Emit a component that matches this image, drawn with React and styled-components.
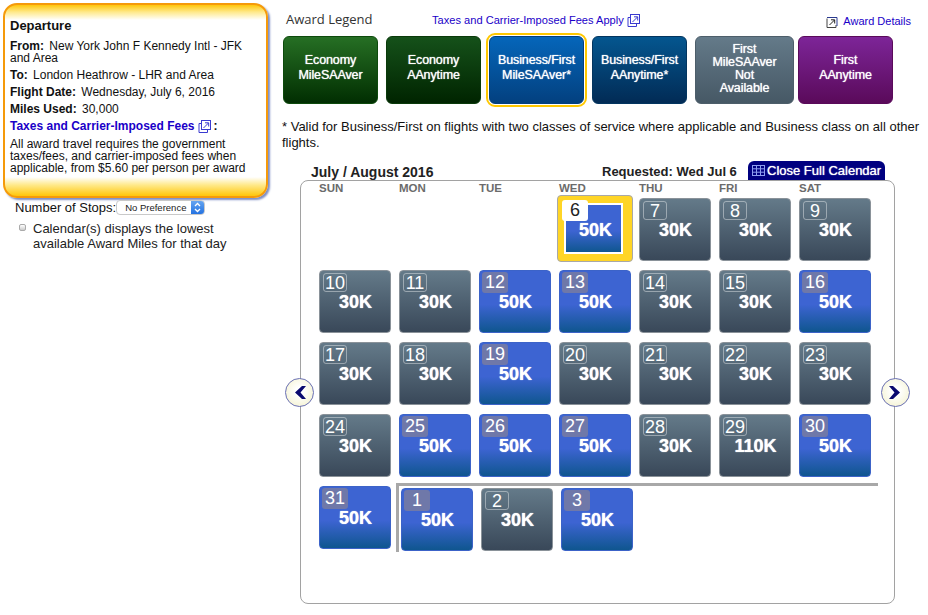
import React from 'react';
import styled, { createGlobalStyle } from 'styled-components';

const Global = createGlobalStyle`
  html, body { margin: 0; padding: 0; background: #fff; }
  body { font-family: "Liberation Sans", Arial, sans-serif; color: #111; }
  * { box-sizing: border-box; }
`;

const Page = styled.div`
  width: 928px; height: 615px; overflow: hidden; display: flex; position: relative;
`;
const Side = styled.aside`
  width: 283px; flex: none; padding: 3px 0 0 3px;
`;
const Main = styled.main`
  width: 645px; flex: none; display: flex; flex-direction: column;
`;

/* Left panel */
const Panel = styled.section`
  width: 265px; height: 195px; border: 2px solid #f59a0a; border-radius: 14px;
  padding: 14px 5px 0 5px; font-size: 12px; line-height: 12px;
  background: linear-gradient(#ffc60a 0, #ffe98a 7px, #fff 15px, #fff 172px, #ffe98a 180px, #ffc60a 191px);
  box-shadow: 2px 2px 2px #7f8fc4;
`;
const PanelTitle = styled.h2`
  margin: 0 0 7px; font-size: 13px; line-height: 14px; font-weight: bold;
`;
const InfoLine = styled.p`
  margin: 0 0 5px; color: #111;
  b { margin-right: 2px; }
`;
const FeesLine = styled.div`
  display: flex; align-items: center; height: 12px; gap: 3px; font-weight: bold;
`;
const Link = styled.a`
  color: #1a00c8; text-decoration: none;
`;
const BoldLink = styled(Link)`font-weight: bold;`;
const FeesNote = styled.p`margin: 6px 0 0;`;

const Stops = styled.div`
  display: flex; align-items: center; gap: 0; margin: 1px 0 0 12px; font-size: 13px; height: 16px;
`;
const Select = styled.div`
  width: 89px; height: 15px; border-radius: 4px; border: 1px solid #c9c9c9; background: #fff;
  display: flex; align-items: center; justify-content: space-between;
  font-size: 9.5px; padding-left: 8px; color: #222; overflow: hidden;
`;
const SelectCap = styled.span`
  width: 13px; height: 15px; display: flex; align-items: center; justify-content: center;
  background: linear-gradient(#6aa8f2, #1f6fe0);
`;
const CheckRow = styled.label`
  display: flex; margin: 6px 0 0 16px; font-size: 13px; line-height: 15px; color: #222;
`;
const Check = styled.span`
  width: 7px; height: 7px; margin: 3px 7px 0 0; flex: none; border-radius: 2px;
  border: 1px solid #aaa; background: linear-gradient(#fff, #ccc);
`;

/* Legend */
const LegendHead = styled.div`
  height: 36px; display: flex; align-items: flex-start; position: relative;
`;
const LegendTitle = styled.h3`
  margin: 12px 0 0 3px; width: 146px; font: 400 13px/15px "Open Sans", sans-serif; color: #333;
`;
const TaxLink = styled(Link)`
  margin-top: 13px; font-size: 11.1px; line-height: 14px; display: flex; align-items: center; gap: 3px;
`;
const DetailLink = styled(Link)`
  margin: 14px 0 0 auto; padding-right: 17px; font-size: 11px; line-height: 14px; display: flex; align-items: center; gap: 5px;
`;
const LegendRow = styled.div`
  display: flex; gap: 8px; height: 68px;
`;
const palette = {
  green: ['#266f24', '#012e01', '#0d4a0c'],
  dark: ['#15511a', '#002400', '#0a3a0a'],
  blue: ['#0566ba', '#03407f', '#03407f'],
  navy: ['#04568f', '#022b55', '#03355f'],
  gray: ['#647a89', '#465865', '#4d5e6a'],
  purple: ['#7d2598', '#5a0a5a', '#5a0a5a'],
};
const LegendItem = styled.div`
  width: ${p => p.$w || 95}px; height: 68px; border-radius: 6px; flex: none;
  background: linear-gradient(${p => palette[p.$c][0]}, ${p => palette[p.$c][1]});
  border: 1px solid ${p => palette[p.$c][2]};
  color: #fff; font-size: 12.5px; line-height: ${p => p.$tight ? 13 : 15}px; font-weight: 400;
  text-shadow: 0 0 1px #fff;
  display: flex; align-items: center; justify-content: center; text-align: center;
  letter-spacing: -0.1px; padding-bottom: ${p => p.$tight ? 3 : 5}px;
  margin-right: ${p => p.$tight ? -4 : 0}px;
  outline: ${p => p.$active ? '2px solid #ffc800' : 'none'};
  outline-offset: 1px;
`;
const Note = styled.p`
  margin: 15px 0 0 -1px; width: 645px; font-size: 13px; line-height: 16px; color: #111; height: 33px;
`;

/* Calendar */
const CalHead = styled.div`
  display: flex; align-items: flex-end; height: 18px; margin-top: 10px; padding-left: 28px; position: relative;
`;
const MonthTitle = styled.h3`
  margin: 0 0 1px; font-size: 14px; line-height: 14px; font-weight: bold; color: #222; width: 291px;
`;
const Requested = styled.span`
  font-size: 13px; line-height: 14px; font-weight: bold; color: #222; width: 146px; white-space: nowrap; margin-bottom: 1px;
`;
const CloseTab = styled.div`
  width: 137px; height: 19px; background: #000080; color: #fff; border-radius: 6px 6px 0 0;
  font-size: 13px; font-weight: 400; text-shadow: 0 0 1px #fff; display: flex; align-items: center; gap: 1px; padding-left: 3px; white-space: nowrap;
`;
const CalPanel = styled.div`
  margin-left: 17px; width: 595px; height: 424px; border: 1px solid #a2a2a2; border-radius: 8px;
  position: relative; padding: 0 0 0 18px;
`;
const WeekHead = styled.div`
  display: grid; grid-template-columns: repeat(7, 72px); column-gap: 8px; height: 17px;
`;
const WeekDay = styled.span`
  font-size: 11.5px; line-height: 13px; font-weight: bold; color: #6b6b6b; margin-top: 1px;
`;
const Grid = styled.div`
  display: grid; grid-template-columns: repeat(7, 72px); grid-auto-rows: 63px; gap: 9px 8px;
`;
const CellBox = styled.div`
  width: 72px; height: 63px; border-radius: 4px; position: relative; color: #fff;
  border: 1px solid ${p => p.$blue ? '#3c63c8' : '#8a9299'};
  background: ${p => p.$blue
    ? 'linear-gradient(#3d64d2 0, #3d64d2 55%, #0f568f 100%)'
    : 'linear-gradient(#647a89, #394859)'};
  grid-column: ${p => p.$col || 'auto'};
`;
const Num = styled.span`
  position: absolute; left: ${p => p.$blue ? 2 : 3}px; top: ${p => p.$blue ? 1 : 2}px; min-width: ${p => p.$blue ? 26 : 24}px; height: ${p => p.$blue ? 21 : 19}px;
  padding: 0 1px; border-radius: 3px; font-size: 18px; line-height: ${p => p.$blue ? 20 : 18}px; text-align: center;
  background: ${p => p.$blue ? '#6f78a9' : 'transparent'};
  border: ${p => p.$blue ? 'none' : '1px solid rgba(255,255,255,.4)'};
`;
const Miles = styled.span`
  display: block; padding: 21px 0 0 1px; text-align: center; font-size: 18px; line-height: 21px; font-weight: bold; text-shadow: 0 0 1px #fff;
`;
const Selected = styled.div`
  margin: -3px -2px; width: 76px; height: 67px; border-radius: 4px; border: 1px solid #a8a8a8;
  background: #ffd526; padding: 7px 0 0 6px; position: relative; grid-column: ${p => p.$col};
`;
const SelectedInner = styled.div`
  width: 59px; height: 51px; border: 2px solid #fff; color: #fff;
  background: linear-gradient(#3d64d2 0, #3d64d2 55%, #0f568f 100%);
`;
const SelectedNum = styled.span`
  position: absolute; left: 4px; top: 4px; width: 26px; height: 21px; background: #fff; border-radius: 3px;
  color: #222; font-size: 18px; line-height: 21px; text-align: center;
`;
const SelectedMiles = styled.span`
  display: block; padding: 15px 0 0 4px; text-align: center; font-size: 18px; line-height: 21px; font-weight: bold; text-shadow: 0 0 1px #fff;
`;
const NextMonth = styled.div`
  grid-column: 2 / -1; margin: -3px -7px 0 -3px; height: 69px; border-top: 3px solid #a8a8a8; border-left: 3px solid #a8a8a8;
  padding: 2px 0 0 2px; display: flex; gap: 8px;
`;
const Arrow = styled.button`
  position: absolute; top: 197px; ${p => p.$side}: -16px; width: 29px; height: 29px; padding: 0;
  border-radius: 50%; border: 1px solid #6a70b4;
  background: radial-gradient(circle at 50% 45%, #fff 20%, #f2f0c8 100%);
  display: flex; align-items: center; justify-content: center;
`;

const ExtIcon = ({ color = '#3a3ad0', size = 13 }) => (
  <svg width={size} height={size} viewBox="0 0 13 13" fill="none" stroke={color} strokeWidth="1">
    <path d="M3.5 3.5H1v9h8.5V10" />
    <rect x="3.5" y="0.5" width="9" height="9" />
    <path d="M5.5 8 10.5 3M7 2.8h3.7v3.7" />
  </svg>
);
const DetailIcon = () => (
  <svg width="12" height="13" viewBox="0 0 12 13" fill="none" stroke="#444" strokeWidth="1">
    <path d="M1 3.5V12.5H10V10" />
    <path d="M1 2.5H11V11" stroke="#2a3a90" />
    <path d="M3.5 10 8.5 5M5 4.8h3.7v3.7" stroke="#222" />
  </svg>
);
const GridIcon = () => (
  <svg width="15" height="13" viewBox="0 0 15 13" fill="none" stroke="#8f9ff0" strokeWidth="1">
    <rect x="1.5" y="1.5" width="12" height="10" />
    <path d="M5.5 1.5v10M9.5 1.5v10M1.5 4.8h12M1.5 8.2h12" />
  </svg>
);
const Updown = () => (
  <svg width="7" height="11" viewBox="0 0 7 11" fill="none" stroke="#fff" strokeWidth="1.3">
    <path d="M1 4 3.5 1.5 6 4M1 7l2.5 2.5L6 7" />
  </svg>
);
const Chevron = ({ left }) => (
  <svg width="13" height="15" viewBox="0 0 13 15">
    <path d={left ? 'M9 1H13L7.5 7.5 13 14H9L2 7.5Z' : 'M4 1H0L5.5 7.5 0 14H4L11 7.5Z'} fill="#0a0a70" />
  </svg>
);

const Cell = ({ n, v, col }) => {
  const blue = v === '50K';
  return (
    <CellBox $blue={blue} $col={col}>
      <Num $blue={blue}>{n}</Num>
      <Miles>{v}</Miles>
    </CellBox>
  );
};

const july = [
  [7, '30K'], [8, '30K'], [9, '30K'],
  [10, '30K'], [11, '30K'], [12, '50K'], [13, '50K'], [14, '30K'], [15, '30K'], [16, '50K'],
  [17, '30K'], [18, '30K'], [19, '50K'], [20, '30K'], [21, '30K'], [22, '30K'], [23, '30K'],
  [24, '30K'], [25, '50K'], [26, '50K'], [27, '50K'], [28, '30K'], [29, '110K'], [30, '50K'],
  [31, '50K'],
];
const august = [[1, '50K'], [2, '30K'], [3, '50K']];

export default function App() {
  return (
    <Page>
      <Global />
      <Side>
        <Panel>
          <PanelTitle>Departure</PanelTitle>
          <InfoLine><b>From:</b> New York John F Kennedy Intl - JFK and Area</InfoLine>
          <InfoLine><b>To:</b> London Heathrow - LHR and Area</InfoLine>
          <InfoLine><b>Flight Date:</b> Wednesday, July 6, 2016</InfoLine>
          <InfoLine><b>Miles Used:</b> 30,000</InfoLine>
          <FeesLine>
            <BoldLink href="#">Taxes and Carrier-Imposed Fees</BoldLink><ExtIcon /><span>:</span>
          </FeesLine>
          <FeesNote>All award travel requires the government taxes/fees, and carrier-imposed fees when applicable, from $5.60 per person per award</FeesNote>
        </Panel>
        <Stops>
          Number of Stops:
          <Select>No Preference<SelectCap><Updown /></SelectCap></Select>
        </Stops>
        <CheckRow>
          <Check />
          <span>Calendar(s) displays the lowest<br />available Award Miles for that day</span>
        </CheckRow>
      </Side>
      <Main>
        <LegendHead>
          <LegendTitle>Award Legend</LegendTitle>
          <TaxLink href="#">Taxes and Carrier-Imposed Fees Apply <ExtIcon /></TaxLink>
          <DetailLink href="#"><DetailIcon /> Award Details</DetailLink>
        </LegendHead>
        <LegendRow>
          <LegendItem $c="green">Economy<br />MileSAAver</LegendItem>
          <LegendItem $c="dark">Economy<br />AAnytime</LegendItem>
          <LegendItem $c="blue" $active>Business/First<br />MileSAAver*</LegendItem>
          <LegendItem $c="navy">Business/First<br />AAnytime*</LegendItem>
          <LegendItem $c="gray" $w={99} $tight>First<br />MileSAAver<br />Not<br />Available</LegendItem>
          <LegendItem $c="purple">First<br />AAnytime</LegendItem>
        </LegendRow>
        <Note>* Valid for Business/First on flights with two classes of service where applicable and Business class on all other flights.</Note>
        <CalHead>
          <MonthTitle>July / August 2016</MonthTitle>
          <Requested>Requested: Wed Jul 6</Requested>
          <CloseTab><GridIcon />Close Full Calendar</CloseTab>
        </CalHead>
        <CalPanel>
          <WeekHead>
            {['SUN', 'MON', 'TUE', 'WED', 'THU', 'FRI', 'SAT'].map(d => <WeekDay key={d}>{d}</WeekDay>)}
          </WeekHead>
          <Grid>
            <Selected $col={4}>
              <SelectedInner><SelectedMiles>50K</SelectedMiles></SelectedInner>
              <SelectedNum>6</SelectedNum>
            </Selected>
            {july.map(([n, v]) => <Cell key={n} n={n} v={v} />)}
            <NextMonth>
              {august.map(([n, v]) => <Cell key={n} n={n} v={v} />)}
            </NextMonth>
          </Grid>
          <Arrow $side="left" aria-label="Previous"><Chevron left /></Arrow>
          <Arrow $side="right" aria-label="Next"><Chevron /></Arrow>
        </CalPanel>
      </Main>
    </Page>
  );
}
